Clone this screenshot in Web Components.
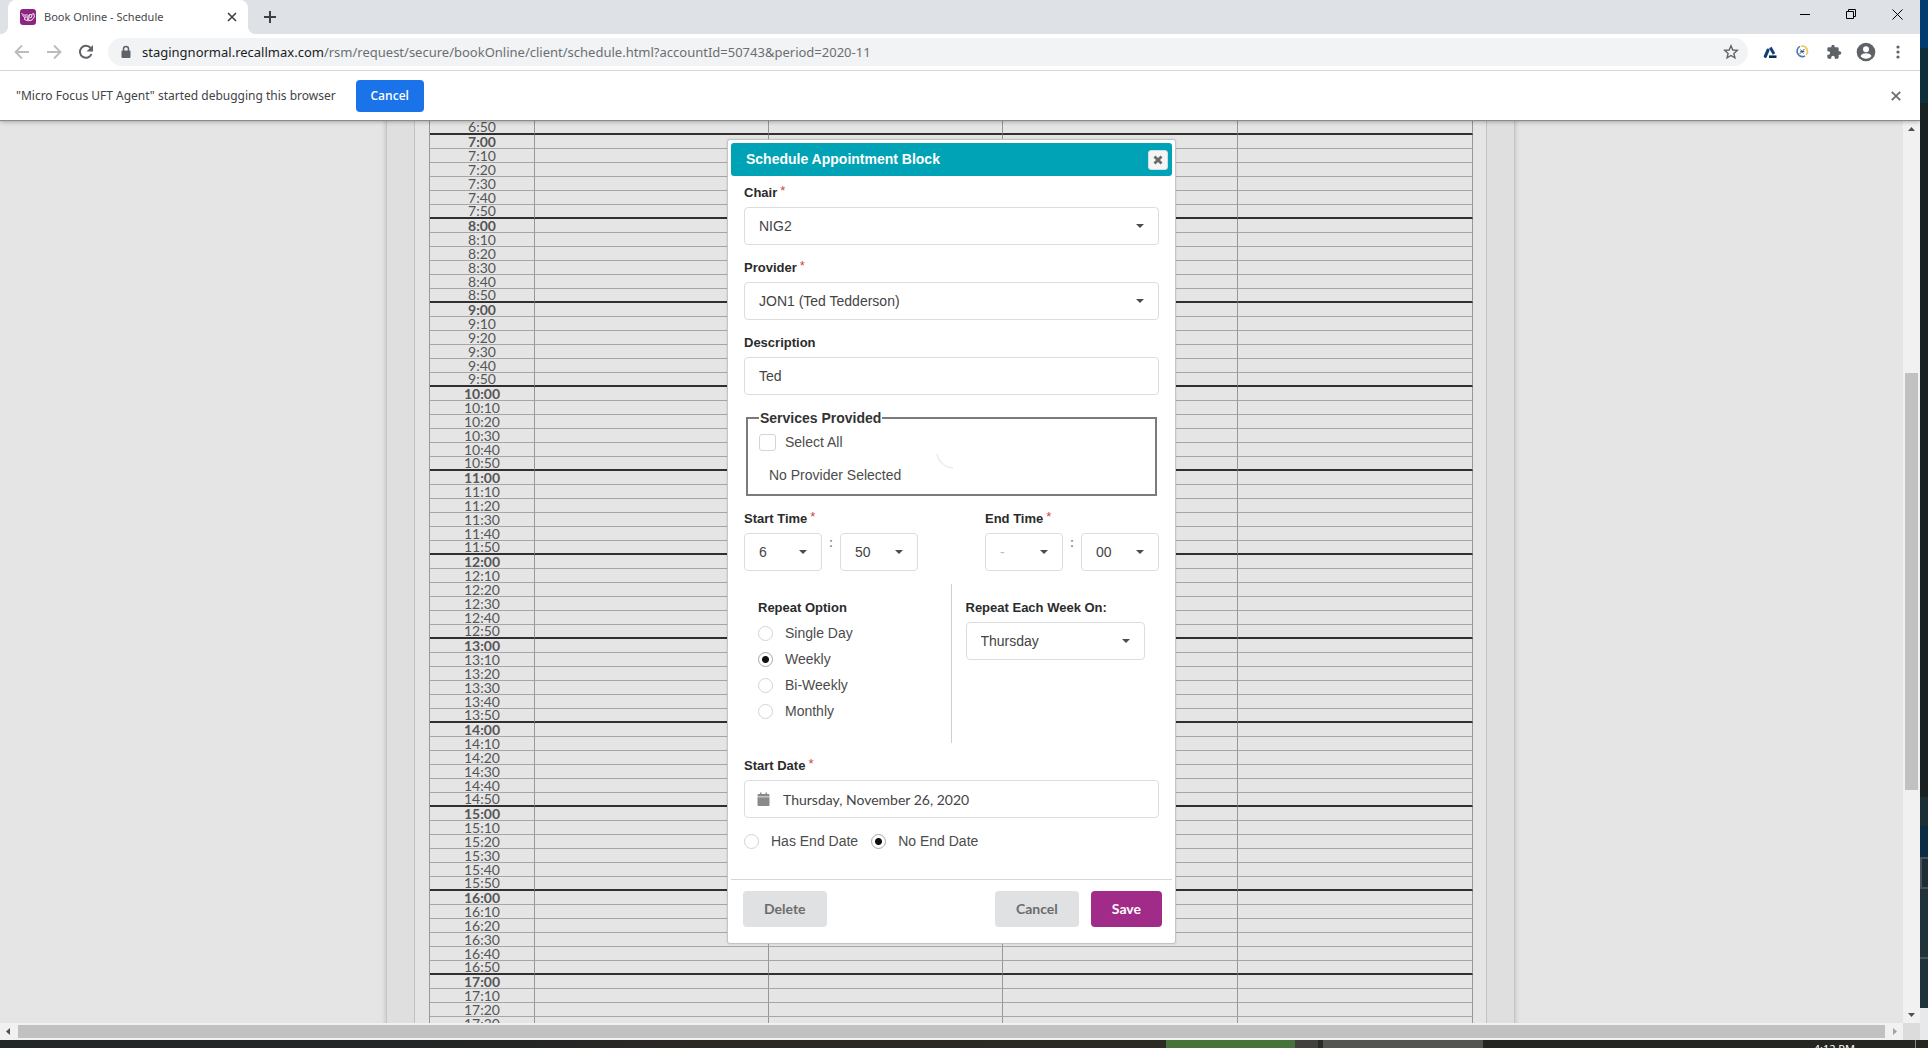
<!DOCTYPE html>
<html lang="en">
<head>
<meta charset="utf-8">
<title>Book Online - Schedule</title>
<style>
html, body { height: 100%; margin: 0; overflow: hidden; }
body { font-family: "Liberation Sans", Arial, sans-serif; font-size: 14px; color: #333; background: #1c2224; }
</style>
</head>
<body>
<desktop-shell>
  <browser-window>
    <tab-strip slot="chrome">Book Online - Schedule</tab-strip>
    <address-bar slot="chrome" host="stagingnormal.recallmax.com" path="/rsm/request/secure/bookOnline/client/schedule.html?accountId=50743&amp;period=2020-11"></address-bar>
    <info-bar slot="chrome" action="Cancel">"Micro Focus UFT Agent" started debugging this browser</info-bar>
    <schedule-grid></schedule-grid>
    <modal-dialog slot="overlay" heading="Schedule Appointment Block">
      <appointment-form></appointment-form>
      <dialog-actions slot="footer"></dialog-actions>
    </modal-dialog>
    <scroll-bar slot="vbar" direction="vertical" before="236" thumb="417" after="216"></scroll-bar>
    <scroll-bar slot="hbar" direction="horizontal" before="1" thumb="1867" after="1"></scroll-bar>
  </browser-window>
  <desktop-edge slot="edge"></desktop-edge>
  <task-bar slot="taskbar" time="4:12 PM"></task-bar>
</desktop-shell>

<script>
const define = (name, render) => customElements.define(name, class extends HTMLElement {
  connectedCallback() {
    if (this.shadowRoot) return;
    const root = this.attachShadow({ mode: 'open' });
    root.innerHTML = `<style>*{box-sizing:border-box}:host{display:block;box-sizing:border-box}</style>` + render(this);
  }
});

const UI_FONT = '"Noto Sans","Open Sans",sans-serif';

define('desktop-shell', () => `
<style>
:host { display: grid; grid-template: "win edge" minmax(0,1fr) "bar bar" 8px / minmax(0,1fr) 8px; height: 100vh; }
::slotted(browser-window) { grid-area: win; }
::slotted([slot=edge]) { grid-area: edge; }
::slotted([slot=taskbar]) { grid-area: bar; }
</style>
<slot></slot><slot name="edge"></slot><slot name="taskbar"></slot>`);

define('desktop-edge', () => `
<style>
:host { display: flex; flex-direction: column; }
i { display: block; }
</style>
<i style="flex:48;background:#003c70"></i>
<i style="flex:56;background:#0d2f3b"></i>
<i style="flex:698;background:#1a2123"></i>
<i style="flex:29;background:#1d2f36"></i>
<i style="flex:31;background:#0a2d43"></i>
<i style="flex:28;background:#1f2f36;border:2px solid #48525b;border-right:0"></i>
<i style="flex:69;background:#20323a"></i>
<i style="flex:49;background:#20323a;border-top:2px solid #48525b"></i>
<i style="flex:32;background:#e8e9eb"></i>`);

define('task-bar', el => `
<style>
:host { display: flex; overflow: hidden; background: #24261f; font: 11px/12px ${UI_FONT}; color: #fff; }
i { display: block; flex-basis: 0; }
.tray { flex: 432 0 0; min-width: 0; display: flex; justify-content: flex-end; border-right: 1px solid #8a8a84; }
time { margin-right: 60px; margin-top: 3px; white-space: nowrap; }
</style>
<i style="flex:1167;background:linear-gradient(90deg,#212627,#242626 45%,#2c2822 60%,#2b2b24)"></i>
<i style="flex:129;background:#45733a"></i>
<i style="flex:23;background:#43413b"></i>
<i style="flex:5;background:#2b2b26"></i>
<i style="flex:160;background:#54554f"></i>
<div class="tray"><time>${el.getAttribute('time')}</time></div>
<i style="flex:12"></i>`);

define('browser-window', () => `
<style>
:host { display: flex; flex-direction: column; min-height: 0; background: #fff; }
header { position: relative; z-index: 3; box-shadow: 0 0 0 1px #8c8c8c, 0 1px 5px rgba(0,0,0,.4); clip-path: inset(0 0 -8px 0); background: #fff; }
main { flex: 1; min-height: 0; display: grid; grid-template: minmax(0,1fr) 17px / minmax(0,1fr) 17px; background: #dcdcdc; }
.view { position: relative; overflow: hidden; background: #e5e5e5; padding-right: 2px; }
.overlay { position: absolute; inset: 0; display: flex; justify-content: center; align-items: flex-start; padding-top: 19px; z-index: 2; }
</style>
<header><slot name="chrome"></slot></header>
<main>
  <section class="view"><slot></slot><div class="overlay"><slot name="overlay"></slot></div></section>
  <slot name="vbar"></slot><slot name="hbar"></slot>
</main>`);

define('tab-strip', () => `
<style>
:host { display: flex; align-items: center; height: 34px; background: #dee1e6; font: 11px/16px ${UI_FONT}; color: #45494d; padding-left: 8px; }
.tab { position: relative; display: flex; align-items: center; width: 240px; height: 34px; padding: 0 11px 0 12px; gap: 8px; background: #fff; border-radius: 8px 8px 0 0; }
.tab::before, .tab::after { content: ""; position: absolute; bottom: 0; width: 8px; height: 8px; }
.tab::before { left: -8px; background: radial-gradient(circle at 0 0, transparent 8px, #fff 8px); }
.tab::after { right: -8px; background: radial-gradient(circle at 100% 0, transparent 8px, #fff 8px); }
.title { flex: 1; white-space: nowrap; }
button { border: 0; background: none; padding: 0; display: grid; place-items: center; }
svg { display: block; }
.new { margin-left: 15px; }
.win { margin-left: auto; display: flex; align-self: flex-start; }
.win button { width: 46px; height: 28px; }
</style>
<div class="tab">
  <svg width="16" height="16" viewBox="0 0 16 16"><rect width="16" height="16" rx="3" fill="#8c2581"/><path d="M1.500 4.500L4 6.200l3.500-.4M2.500 6.500l2 1.500h3M5 8l-.5 2.500 3 1.200.7-5.700M8.500 11.500l1-6 2.500.3-.5 2.500-1.500.5M12 5l2-.3.3 3.300-2.300 3-3.500.8" fill="none" stroke="#fff" stroke-width=".9"/></svg>
  <span class="title"><slot></slot></span>
  <button aria-label="Close tab"><svg width="10" height="10" viewBox="0 0 10 10"><path d="M1 1l8 8M9 1l-8 8" stroke="#3c4043" stroke-width="1.600"/></svg></button>
</div>
<button class="new" aria-label="New tab"><svg width="14" height="14" viewBox="0 0 14 14"><path d="M7 1v12M1 7h12" stroke="#3c4043" stroke-width="2"/></svg></button>
<div class="win">
  <button aria-label="Minimize"><svg width="10" height="10" viewBox="0 0 10 10"><path d="M0 5.500h10" stroke="#000"/></svg></button>
  <button aria-label="Restore"><svg width="10" height="10" viewBox="0 0 10 10"><path d="M.5 2.500h7v7h-7zM2.500 2.500v-2h7v7h-2" fill="none" stroke="#000"/></svg></button>
  <button aria-label="Close window"><svg width="11" height="11" viewBox="0 0 11 11"><path d="M.5.5l10 10M10.500.5l-10 10" stroke="#000"/></svg></button>
</div>`);

define('address-bar', el => `
<style>
:host { display: flex; align-items: center; height: 37px; background: #fff; border-bottom: 1px solid #d5d7d9; padding: 0 14px; }
button { border: 0; background: none; padding: 0; width: 16px; height: 16px; display: grid; place-content: center; margin-right: 16px; }
.ext button { margin: 0; }
.nav { display: flex; }
form { flex: 1; display: flex; align-items: center; height: 28px; border-radius: 14px; background: #f1f3f4; padding: 0 9px 0 12px; margin: 0 14px 0 -2px; gap: 10px; font: 13px/20px ${UI_FONT}; }
.url { flex: 1; color: #6b6f73; white-space: nowrap; } .url b { font-weight: 400; color: #202124; }
form button { margin: 0; }
.ext { display: flex; gap: 16px; }
svg { display: block; }
</style>
<div class="nav">
<button aria-label="Back"><svg width="16" height="16" viewBox="0 0 16 16"><path d="M15 8H2M8 1.500L1.500 8 8 14.500" fill="none" stroke="#babcbe" stroke-width="1.800"/></svg></button>
<button aria-label="Forward"><svg width="16" height="16" viewBox="0 0 16 16"><path d="M1 8h13M8 1.500L14.500 8 8 14.500" fill="none" stroke="#babcbe" stroke-width="1.800"/></svg></button>
<button aria-label="Reload"><svg width="16" height="16" viewBox="0 0 16 16"><path d="M13.500 10A6 6 0 1 1 12.600 4" fill="none" stroke="#5f6368" stroke-width="2"/><path d="M15 1v6.500H8.500z" fill="#5f6368"/></svg></button>
</div>
<form>
  <svg width="12" height="14" viewBox="0 0 12 14"><path d="M3.500 6V4a2.500 2.500 0 0 1 5 0v2" fill="none" stroke="#5f6368" stroke-width="1.500"/><rect x="1.500" y="5.500" width="9" height="7.500" rx="1" fill="#5f6368"/></svg>
  <span class="url"><b>${el.getAttribute('host')}</b>${el.getAttribute('path').replace(/&/g, '&amp;')}</span>
  <button type="button" aria-label="Bookmark"><svg width="16" height="16" viewBox="0 0 16 16"><path d="M8 1.800l1.800 4.200 4.500.4-3.400 3 1 4.500L8 11.500l-3.900 2.400 1-4.500-3.400-3 4.500-.4z" fill="none" stroke="#5f6368" stroke-width="1.400"/></svg></button>
</form>
<div class="ext">
<button aria-label="Drive"><svg width="16" height="16" viewBox="0 0 16 16"><path d="M6 6.200L3.300 12.300" stroke="#12406f" stroke-width="3.200" stroke-linecap="round"/><path d="M8.300 3.500L12 10" stroke="#12406f" stroke-width="2.800"/><path d="M7 12.700h7.500" stroke="#0b2c50" stroke-width="2.600"/></svg></button>
<button aria-label="Extension"><svg width="16" height="16" viewBox="0 0 16 16"><path d="M7 2.200A5.300 5.300 0 0 1 12 11" fill="none" stroke="#f1c35a" stroke-width="1.600"/><path d="M6 2.400A5.300 5.300 0 1 0 11 12" fill="none" stroke="#4a78b8" stroke-width="1.600"/><path d="M5.500 10L10.500 5M6.500 5.500l3 4M6.300 7.500h4" stroke="#35587c" stroke-width="1"/></svg></button>
<button aria-label="Extensions"><svg width="16" height="16" viewBox="0 0 24 24"><path d="M20.500 11H19V7a2 2 0 0 0-2-2h-4V3.500a2.500 2.500 0 0 0-5 0V5H4a2 2 0 0 0-2 2v3.800h1.500a2.700 2.700 0 0 1 0 5.400H2V20a2 2 0 0 0 2 2h3.800v-1.500a2.700 2.700 0 0 1 5.400 0V22H17a2 2 0 0 0 2-2v-4h1.500a2.500 2.500 0 0 0 0-5z" fill="#5f6368"/></svg></button>
<button aria-label="Profile"><svg width="20" height="20" viewBox="0 0 20 20"><circle cx="10" cy="10" r="9.300" fill="#5f6368"/><circle cx="10" cy="7.200" r="3" fill="#fff"/><path d="M4.500 14c1-2 3.500-2.700 5.500-2.700s4.500.7 5.500 2.700c-1.200 1.800-3.300 2.800-5.500 2.800S5.700 15.800 4.500 14z" fill="#fff"/></svg></button>
<button aria-label="Menu"><svg width="16" height="16" viewBox="0 0 16 16"><g fill="#5f6368"><circle cx="8" cy="3" r="1.600"/><circle cx="8" cy="8" r="1.600"/><circle cx="8" cy="13" r="1.600"/></g></svg></button>
</div>`);

define('info-bar', el => `
<style>
:host { display: flex; align-items: center; height: 49px; padding: 0 19px 0 16px; font: 12px/18px ${UI_FONT}; color: #3f4347; background: #fff; }
.go { margin-left: 20px; width: 68px; height: 32px; border: 0; border-radius: 4px; background: #1a73e8; color: #fff; font: 600 12px/18px "Open Sans", sans-serif; padding: 0; }
.x { margin-left: auto; border: 0; background: none; padding: 0; }
svg { display: block; }
</style>
<span><slot></slot></span><button class="go">${el.getAttribute('action')}</button>
<button class="x" aria-label="Dismiss"><svg width="10" height="10" viewBox="0 0 10 10"><path d="M.8.8l8.400 8.400M9.200.8L.8 9.200" stroke="#6b6f73" stroke-width="1.800"/></svg></button>`);

define('scroll-bar', el => {
  const v = el.getAttribute('direction') === 'vertical';
  const [a, b, c] = ['before', 'thumb', 'after'].map(k => el.getAttribute(k));
  return `
<style>
:host { display: flex; flex-direction: ${v ? 'column' : 'row'}; background: #f1f1f1; }
svg { flex: none; width: 17px; height: 17px; display: block; }
i { flex: 1; }
.thumb { background: #c1c1c1; margin: ${v ? '0 2px' : '2px 0'}; }
</style>
<svg viewBox="0 0 17 17"><path d="${v ? 'M5 11h7L8.500 7z' : 'M10 5v7L6 8.500z'}" fill="#505050"/></svg>
<i style="flex:${a}"></i><i class="thumb" style="flex:${b}"></i><i style="flex:${c}"></i>
<svg viewBox="0 0 17 17"><path d="${v ? 'M5 7h7L8.500 11z' : 'M7 5v7l4-3.500z'}" fill="${v ? '#505050' : '#a3a3a3'}"/></svg>`;
});

define('schedule-grid', () => {
  let rows = '';
  for (let m = 6 * 60 + 50; m <= 17 * 60 + 30; m += 10) {
    const h = Math.floor(m / 60), mm = String(m % 60).padStart(2, '0');
    const cls = mm === '00' ? 'hour' : mm === '50' ? 'last' : '';
    rows += `<tr class="${cls}"><th scope="row">${h}:${mm}</th><td></td><td></td><td></td><td></td></tr>`;
  }
  return `
<style>
.sheet { width: 1129px; max-width: 100%; margin: 0 auto; padding: 0 27px; background: #dfdfdf; border: 1px solid #c6c6c6; border-width: 0 1px; box-shadow: 0 0 5px rgba(0,0,0,.2); }
.panel { background: #e5e5e5; border: 1px solid #c2c2c2; border-width: 0 1px; padding: 1px 13px 0 14px; }
table { width: 100%; border-collapse: separate; border-spacing: 0; table-layout: fixed; border-left: 1px solid #979797; }
.slim { width: 234px; }
th, td { height: 14px; padding: 0; border-right: 1px solid #979797; border-bottom: 1px solid #a6a6a6; }
th { font: 400 14px/13px Lato, sans-serif; color: #555; text-align: center; }
.hour th { font-weight: 700; }
.last th { line-height: 12px; }
.last th, .last td { border-bottom: 2px solid #332f30; }
</style>
<div class="sheet"><div class="panel"><table><colgroup><col style="width:105px"><col class="slim"><col class="slim"><col><col></colgroup>${rows}</table></div></div>`;
});

define('modal-dialog', el => `
<style>
:host { width: 449px; background: #fff; border: 1px solid #c4c4c4; border-radius: 3px; padding: 3px; box-shadow: 0 0 2px rgba(0,0,0,.15); }
header { display: flex; align-items: center; justify-content: space-between; height: 33px; padding: 0 4px 0 15px; background: #00a3b5; border-radius: 3px; }
h2 { margin: 0; padding-bottom: 1px; font: 700 14px/20px "Liberation Sans", Arial, sans-serif; color: #fff; }
header button { width: 20px; height: 20px; padding: 0; border: 1px solid #cfdfe1; border-radius: 3px; background: #f5f5f5; display: grid; place-items: center; }
footer { border-top: 1px solid #d6d6d6; }
</style>
<header><h2>${el.getAttribute('heading')}</h2><button aria-label="Close"><svg width="10" height="10" viewBox="0 0 10 10"><path d="M1.500 1.500l7 7M8.500 1.500l-7 7" stroke="#6a6a6a" stroke-width="2.800"/></svg></button></header>
<slot></slot>
<footer><slot name="footer"></slot></footer>`);

define('dialog-actions', () => `
<style>
:host { display: flex; gap: 12px; padding: 11px 10px 13px 12px; }
button { height: 36px; border: 0; border-radius: 4px; padding: 0 21px; background: #e0e1e2; color: #6b6c6d; font: 700 14px/20px Lato, sans-serif; }
.push { margin-left: auto; }
.save { background: #a02b88; color: #fff; }
</style>
<button>Delete</button><button class="push">Cancel</button><button class="save">Save</button>`);

const FIELD_CSS = `
label { display: flex; align-items: flex-start; gap: 3px; margin-bottom: 4px; font: 700 13px/20px "Liberation Sans", Arial, sans-serif; color: #2b2b2b; }
label span { color: #d04545; font-weight: 400; line-height: 16px; }
.box { display: grid; height: 38px; border: 1px solid #dcdddf; border-radius: 4px; background: #fff; }
.box > * { grid-area: 1 / 1; }
select, input { width: 100%; height: 36px; margin: 0; border: 0; background: none; appearance: none; padding: 0 14px; font: 14px/20px "Liberation Sans", Arial, sans-serif; color: #444; outline: 0; }
.caret { justify-self: end; align-self: center; margin-right: 14px; border: 4px solid transparent; border-top-color: #4c4c4c; border-bottom: 0; pointer-events: none; }
`;
const star = el => el.hasAttribute('required') ? '<span>*</span>' : '';

define('select-field', el => `
<style>${FIELD_CSS}</style>
<label for="f">${el.getAttribute('label')}${star(el)}</label>
<div class="box"><select id="f"><option>${el.getAttribute('value')}</option></select><i class="caret"></i></div>`);

define('text-field', el => `
<style>${FIELD_CSS}
.icon { display: flex; align-items: center; } svg { flex: none; margin-left: 12px; } .icon input { padding-left: 13px; font-family: Lato, sans-serif; }
</style>
<label for="f">${el.getAttribute('label')}${star(el)}</label>
<div class="box ${el.hasAttribute('calendar') ? 'icon' : ''}">
${el.hasAttribute('calendar') ? '<svg width="13" height="14" viewBox="0 0 13 14"><path d="M1.500 2H3V.5h1.500V2h4V.5H10V2h1.500A1 1 0 0 1 12.500 3v1.500H.5V3a1 1 0 0 1 1-1zM.5 5.300h12V13a1 1 0 0 1-1 1h-10a1 1 0 0 1-1-1z" fill="#8a8a8a"/></svg>' : ''}
<input id="f" type="text" value="${el.getAttribute('value')}"></div>`);

define('time-field', el => `
<style>${FIELD_CSS}
.pair { display: flex; } .box { width: 78px; } .pair > span { width: 18px; text-align: center; font: 14px/18px Lato, sans-serif; color: #777; }
.empty { color: #bbb; }
</style>
<label for="h">${el.getAttribute('label')}${star(el)}</label>
<div class="pair">
<div class="box"><select id="h" class="${el.getAttribute('hour') === '-' ? 'empty' : ''}"><option>${el.getAttribute('hour')}</option></select><i class="caret"></i></div>
<span>:</span>
<div class="box"><select aria-label="${el.getAttribute('label')} minutes"><option>${el.getAttribute('minute')}</option></select><i class="caret"></i></div>
</div>`);

define('choice-group', el => `
<style>
:host { display: flex; gap: 6px; flex-direction: column; }
:host([inline]) { flex-direction: row; gap: 13px; }
label { display: flex; align-items: center; gap: 12px; font: 14px/20px "Liberation Sans", Arial, sans-serif; color: #4c4c4c; }
input { appearance: none; margin: 0; width: 15px; height: 15px; border: 1px solid #d4d4d5; border-radius: 50%; background: #fff; }
input:checked { border-color: #a8a8a8; background: radial-gradient(circle, #111 3px, #fff 4px); }
input[type=checkbox] { width: 17px; height: 17px; border-radius: 3px; }
:host([kind=checkbox]) label { gap: 9px; }
</style>
${el.getAttribute('options').split('|').map(o => `<label><input type="${el.getAttribute('kind') || 'radio'}" name="g"${o === el.getAttribute('value') ? ' checked' : ''}>${o}</label>`).join('')}`);

define('appointment-form', () => `
<style>
:host { padding: 7px 13px 28px; }
form { display: flex; flex-direction: column; gap: 13px; margin: 0; }
fieldset { position: relative; margin: 0 2px; padding: 4px 11px 9px; border: 2px solid #7b7b7b; display: flex; flex-direction: column; gap: 13px; min-width: 0; }
legend { padding: 0 1px; font: 700 14px/20px "Liberation Sans", Arial, sans-serif; color: #333; }
p { margin: 0; padding-left: 10px; font: 14px/20px "Liberation Sans", Arial, sans-serif; color: #4c4c4c; }
.spin { position: absolute; left: 50%; top: 50%; margin: -8px 0 0 -16px; }
.times { display: flex; justify-content: space-between; }
.repeat { display: grid; grid-template-columns: 1fr 1fr; height: 159px; }
.repeat > div { padding: 14px; }
.repeat > div:first-child { border-right: 1px solid #cfcfcf; }
h3 { margin: 0 0 5px; font: 700 13px/20px "Liberation Sans", Arial, sans-serif; color: #2b2b2b; }
</style>
<form>
  <select-field label="Chair" required value="NIG2"></select-field>
  <select-field label="Provider" required value="JON1 (Ted Tedderson)"></select-field>
  <text-field label="Description" value="Ted"></text-field>
  <fieldset><legend>Services Provided</legend>
    <choice-group kind="checkbox" options="Select All"></choice-group>
    <p>No Provider Selected</p>
    <svg class="spin" width="18" height="16" viewBox="0 0 18 16"><path d="M1 1a17 17 0 0 0 16 14" fill="none" stroke="#ececec" stroke-width="1.500"/></svg>
  </fieldset>
  <div class="times">
    <time-field label="Start Time" required hour="6" minute="50"></time-field>
    <time-field label="End Time" required hour="-" minute="00"></time-field>
  </div>
  <div class="repeat">
    <div><h3>Repeat Option</h3><choice-group options="Single Day|Weekly|Bi-Weekly|Monthly" value="Weekly"></choice-group></div>
    <div><select-field label="Repeat Each Week On:" value="Thursday"></select-field></div>
  </div>
  <text-field label="Start Date" required calendar value="Thursday, November 26, 2020"></text-field>
  <choice-group inline options="Has End Date|No End Date" value="No End Date"></choice-group>
</form>`);
</script>
</body>
</html>
